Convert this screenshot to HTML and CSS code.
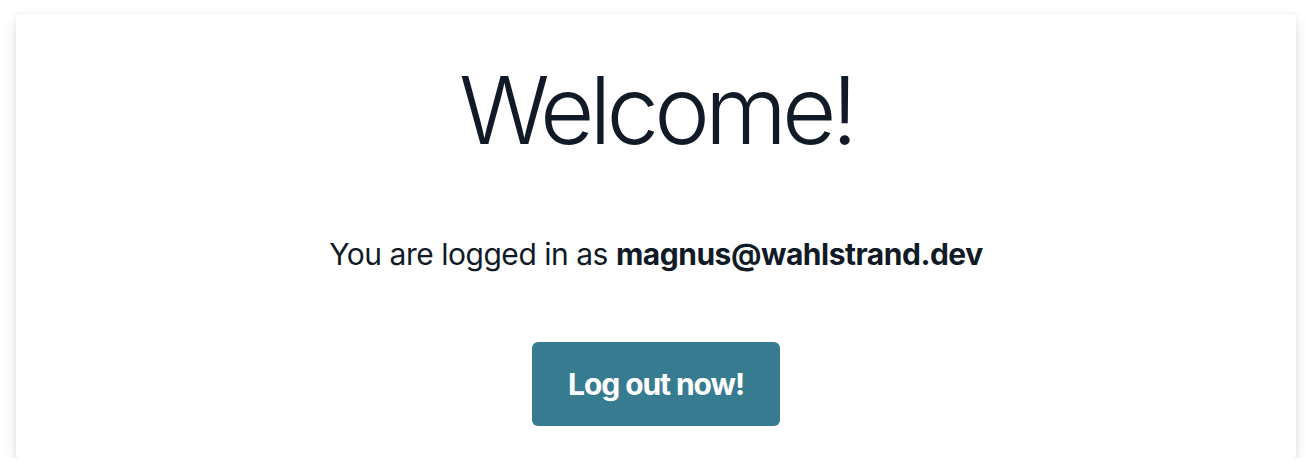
FILE: index.html
```html
<!DOCTYPE html>
<html lang="en">
<head>
<meta charset="utf-8">
<title>Welcome</title>
<link rel="stylesheet" href="styles.css">
</head>
<body>
<main class="card">
  <h1 class="title">Welcome!</h1>
  <p class="info">You are logged in as <strong>magnus@wahlstrand.dev</strong></p>
  <button class="logout" type="button">Log out now!</button>
</main>
</body>
</html>
```

FILE: styles.css
```css
html, body {
  margin: 0;
  padding: 0;
  background: #ffffff;
}

body {
  font-family: Inter, "Noto Sans", sans-serif;
  color: #111b27;
  padding: 14px 10px 0 16px;
}

.card {
  display: flex;
  flex-direction: column;
  align-items: center;
  width: 1280px;
  box-sizing: border-box;
  height: 444px;
  padding: 49px 0 32px;
  background: #ffffff;
  border-radius: 4px;
  box-shadow: 0 6px 14px rgba(0, 0, 0, 0.11), 0 0 6px rgba(0, 0, 0, 0.05);
}

.title {
  margin: 0;
  font-size: 94px;
  line-height: 1;
  font-weight: 300;
  letter-spacing: -0.053em;
}

.info {
  margin: 79px 0 0;
  font-size: 30px;
  line-height: 36px;
  font-weight: 400;
  letter-spacing: -0.016em;
}

.info strong {
  font-weight: 700;
}

.logout {
  margin-top: 70px;
  padding: 24px 36px;
  border: none;
  border-radius: 6px;
  background: #377b91;
  color: #ffffff;
  font-family: Inter, "Noto Sans", sans-serif;
  font-size: 30px;
  line-height: 36px;
  font-weight: 700;
  letter-spacing: -0.036em;
  cursor: pointer;
}
```
